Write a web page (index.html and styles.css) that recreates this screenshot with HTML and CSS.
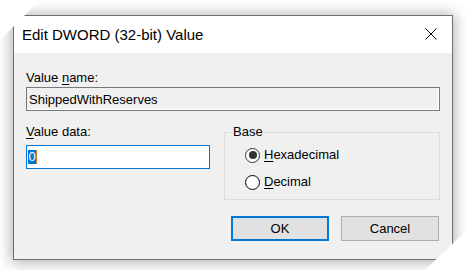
FILE: index.html
```html
<!DOCTYPE html>
<html>
<head>
<meta charset="utf-8">
<link rel="stylesheet" href="styles.css">
</head>
<body>
<div class="dialog">
  <div class="titlebar">
    <span class="title">Edit DWORD (32-bit) Value</span>
    <svg class="close" width="12" height="12" viewBox="0 0 12 12"><path d="M0.5 0.5 L11.5 11.5 M11.5 0.5 L0.5 11.5" stroke="#000" stroke-width="1" fill="none"/></svg>
  </div>
  <div class="content">
    <div class="label">Value <u>n</u>ame:</div>
    <div class="field readonly">ShippedWithReserves</div>
    <div class="row">
      <div class="col-data">
        <div class="label"><u>V</u>alue data:</div>
        <div class="field edit"><span class="sel">0</span><span class="caret"></span></div>
      </div>
      <fieldset class="base">
        <legend>Base</legend>
        <div class="radio"><span class="dot on"></span><span class="rlabel"><u>H</u>exadecimal</span></div>
        <div class="radio second"><span class="dot"></span><span class="rlabel"><u>D</u>ecimal</span></div>
      </fieldset>
    </div>
    <div class="buttons">
      <div class="btn default">OK</div>
      <div class="btn">Cancel</div>
    </div>
  </div>
</div>
</body>
</html>
```

FILE: styles.css
```css
html, body {
  margin: 0;
  padding: 0;
}
body {
  width: 465px;
  height: 270px;
  position: relative;
  overflow: hidden;
  background: #fff;
  font-family: "Liberation Sans", Arial, sans-serif;
  font-size: 13px;
  color: #000;
}
body::before {
  content: "";
  position: absolute;
  left: 0;
  top: 0;
  width: 40px;
  height: 40px;
  background: #fff;
  clip-path: polygon(0 0, 100% 0, 0 100%);
  z-index: 5;
}
body::after {
  content: "";
  position: absolute;
  right: 0;
  bottom: 0;
  width: 40px;
  height: 38px;
  background: #fff;
  clip-path: polygon(100% 0, 100% 100%, 0 100%);
  z-index: 5;
}
.dialog {
  box-sizing: border-box;
  margin: 15px 0 0 13px;
  width: 440px;
  height: 245px;
  border: 1px solid #6f6f6f;
  background: #f0f0f0;
  box-shadow: 0 1px 13px 2px rgba(0, 0, 0, 0.3);
  display: flex;
  flex-direction: column;
}
.titlebar {
  height: 37px;
  background: #fff;
  display: flex;
  align-items: center;
  justify-content: space-between;
  padding: 0 15px 0 8px;
}
.title {
  font-size: 15px;
}
.close {
  display: block;
  margin-top: -1px;
}
.content {
  padding: 17px 12px 0 12px;
  display: flex;
  flex-direction: column;
}
.label {
  line-height: 16px;
  height: 16px;
}
u {
  text-decoration-thickness: 1px;
  text-underline-offset: 2px;
}
.field {
  box-sizing: border-box;
  height: 24px;
  display: flex;
  align-items: center;
}
.readonly {
  margin-top: 1px;
  border: 1px solid #7a7a7a;
  box-shadow: inset -1px -1px 0 #fff;
  padding-left: 2px;
}
.row {
  margin-top: 13px;
  display: flex;
  gap: 14px;
}
.col-data {
  width: 184px;
  flex: none;
}
.edit {
  margin-top: 5px;
  border: 1px solid #0078d7;
  background: #fff;
  padding-left: 1px;
}
.sel {
  background: #0078d7;
  color: #fff;
  line-height: 14px;
  height: 14px;
  padding: 0 0.5px;
}
.caret {
  width: 1px;
  height: 14px;
  background: #c8782a;
}
.base {
  flex: 1;
  min-width: 0;
  margin: 0;
  padding: 7px 0 9px 7px;
  border: 1px solid #dcdcdc;
}
.base legend {
  padding: 0 1px;
  line-height: 16px;
}
.radio {
  margin-left: 13px;
  height: 16px;
  display: flex;
  align-items: center;
  gap: 4px;
}
.radio.second {
  margin-top: 11px;
}
.dot {
  box-sizing: border-box;
  width: 15px;
  height: 15px;
  border-radius: 50%;
  border: 1px solid #000;
  background: #fff;
  display: flex;
  align-items: center;
  justify-content: center;
}
.dot.on {
  border-color: #333;
  border-width: 1.4px;
}
.dot.on::after {
  content: "";
  width: 8px;
  height: 8px;
  border-radius: 50%;
  background: #333;
}
.rlabel {
  line-height: 16px;
}
.buttons {
  margin-top: 16px;
  display: flex;
  justify-content: flex-end;
  gap: 12px;
  padding-right: 1px;
}
.btn {
  box-sizing: border-box;
  width: 98px;
  height: 25px;
  background: #e1e1e1;
  border: 1px solid #adadad;
  display: flex;
  align-items: center;
  justify-content: center;
}
.btn.default {
  border: 2px solid #0078d7;
}
```
